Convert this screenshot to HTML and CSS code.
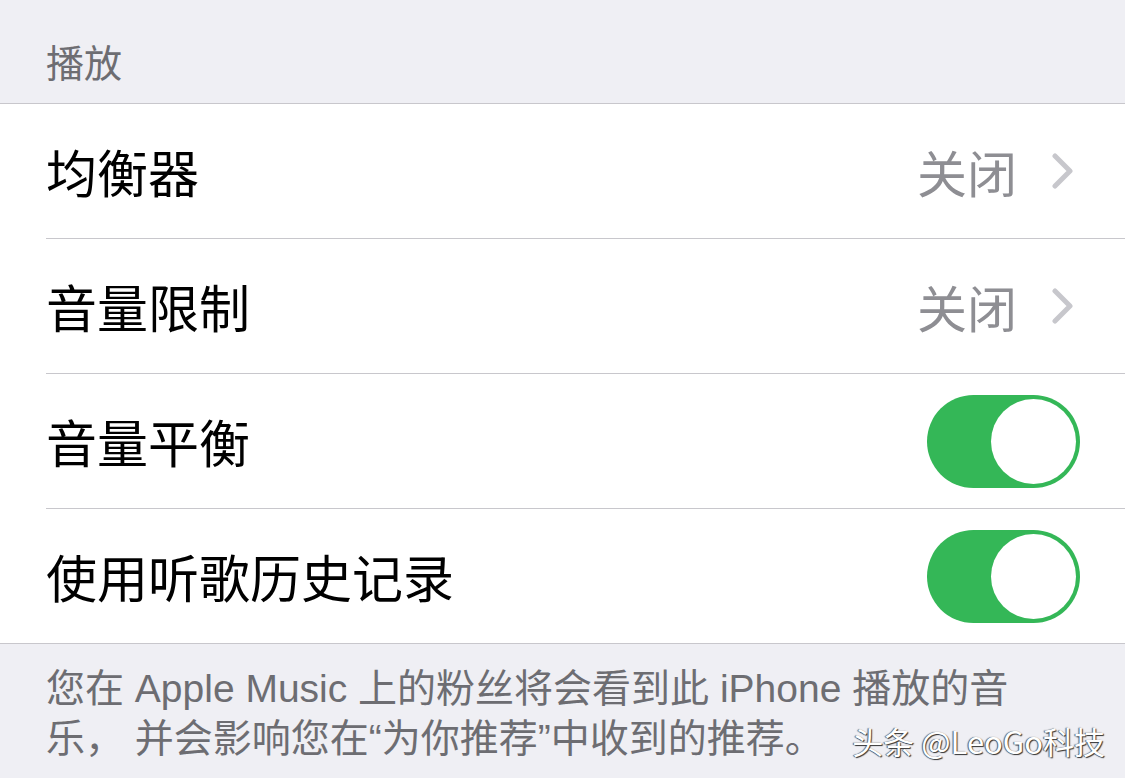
FILE: index.html
```html
<!DOCTYPE html>
<html lang="zh-CN">
<head>
<meta charset="utf-8">
<title>播放</title>
<link rel="stylesheet" href="styles.css">
</head>
<body>
<div class="page">
  <div class="section-header">播放</div>
  <div class="group">
    <div class="row">
      <div class="label">均衡器</div>
      <div class="detail">
        <span class="value">关闭</span>
        <svg class="chevron" width="22" height="36" viewBox="0 0 22 36"><path d="M3 3 L18 18 L3 33" fill="none" stroke="#c7c7cc" stroke-width="5" stroke-linecap="round" stroke-linejoin="round"/></svg>
      </div>
    </div>
    <div class="row">
      <div class="label">音量限制</div>
      <div class="detail">
        <span class="value">关闭</span>
        <svg class="chevron" width="22" height="36" viewBox="0 0 22 36"><path d="M3 3 L18 18 L3 33" fill="none" stroke="#c7c7cc" stroke-width="5" stroke-linecap="round" stroke-linejoin="round"/></svg>
      </div>
    </div>
    <div class="row">
      <div class="label">音量平衡</div>
      <div class="toggle on"><div class="knob"></div></div>
    </div>
    <div class="row last">
      <div class="label">使用听歌历史记录</div>
      <div class="toggle on"><div class="knob"></div></div>
    </div>
  </div>
  <div class="footer">您在 Apple Music 上的粉丝将会看到此 iPhone 播放的音乐， 并会影响您在“为你推荐”中收到的推荐。</div>
  <div class="watermark">头条 @LeoGo科技</div>
</div>
</body>
</html>
```
FILE: styles.css
```css
html, body {
  margin: 0;
  padding: 0;
  background: #efeff4;
}
body {
  font-family: "Noto Sans CJK SC", "Noto Sans", sans-serif;
  width: 1125px;
  height: 778px;
  overflow: hidden;
}
.page {
  position: relative;
  width: 1125px;
  height: 778px;
  background: #efeff4;
}
.section-header {
  height: 104px;
  box-sizing: border-box;
  padding: 37px 0 0 46px;
  font-size: 38px;
  line-height: 48px;
  color: #6d6d72;
  border-bottom: 1px solid #c8c7cc;
}
.group {
  background: #fff;
  padding-left: 46px;
  border-bottom: 1px solid #c8c7cc;
}
.row {
  height: 134px;
  display: flex;
  align-items: center;
  justify-content: space-between;
  border-bottom: 1px solid #c8c7cc;
  padding-right: 45px;
}
.row.last {
  border-bottom: none;
}
.label {
  font-size: 51px;
  line-height: 60px;
  color: #000;
}
.detail {
  display: flex;
  align-items: center;
  gap: 35px;
  margin-right: 6px;
}
.value {
  font-size: 50px;
  line-height: 60px;
  color: #8e8e93;
}
.chevron {
  display: block;
}
.toggle {
  width: 153px;
  height: 93px;
  border-radius: 47px;
  background: #34b757;
  position: relative;
}
.knob {
  position: absolute;
  top: 4px;
  right: 4px;
  width: 85px;
  height: 85px;
  border-radius: 50%;
  background: #fff;
}
.footer {
  padding: 20px 100px 0 46px;
  font-family: "Liberation Sans", "Noto Sans CJK SC", sans-serif;
  font-size: 39px;
  line-height: 50px;
  color: #6d6d72;
}
.watermark {
  position: absolute;
  right: 20px;
  bottom: 17px;
  font-size: 31px;
  line-height: 40px;
  color: #fff;
  text-shadow: 1px 1px 1px #333, -1px 0 1px #555;
}
```
